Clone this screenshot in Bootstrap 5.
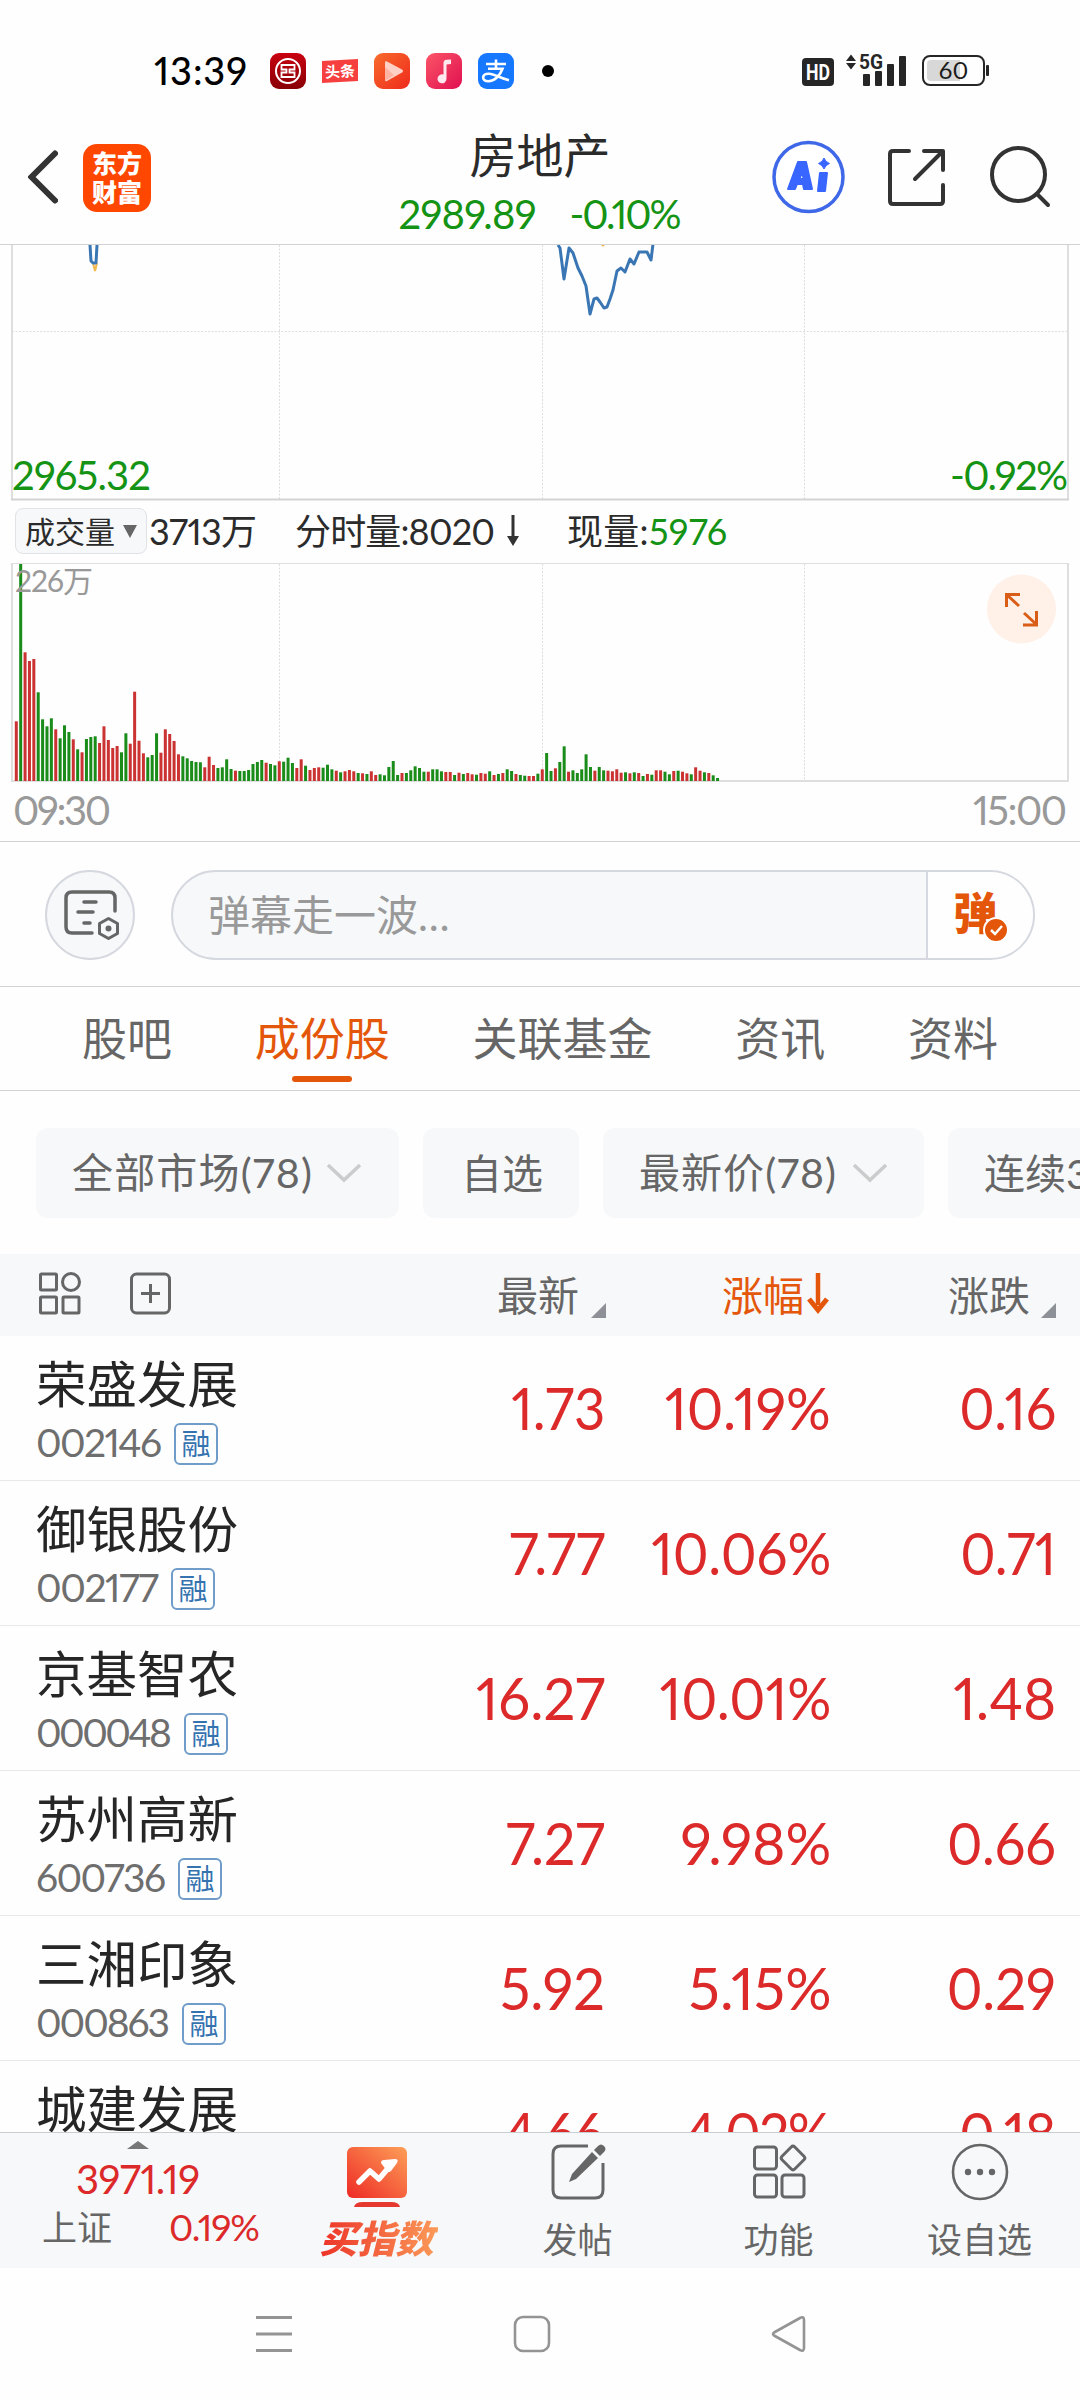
<!DOCTYPE html>
<html lang="zh-CN">
<head>
<meta charset="utf-8">
<meta name="viewport" content="width=device-width, initial-scale=1">
<title>房地产</title>
<link rel="stylesheet" href="https://cdn.jsdelivr.net/npm/bootstrap@5.3.0/dist/css/bootstrap.min.css">
<style>
:root{--up:#dc2a2a;--down:#149314;--brand:#e4570b;--soft:#f6f8fa;--rule:#d2d2d2;--txt2:#666}
html,body{width:1080px;height:2400px;overflow:hidden}
body{font-family:Lato,"Noto Sans CJK SC",sans-serif;font-feature-settings:"pnum" 1;color:#2b2b2b;background:#fefefe;line-height:1;font-size:42px;white-space:nowrap}
svg{display:block;flex:none}
.up{color:var(--up)}.down{color:var(--down)}.brandc{color:var(--brand)}
.fit{display:inline-block}
.statusbar{height:100px;padding:41px 91px 0 154px}
.clock{font-size:38px;font-weight:500;color:#000;width:116px;line-height:58px}
.statusicons{gap:16px}
.topbar{height:145px;border-bottom:1px solid var(--rule);position:relative;padding:0 28px 0 28px}
.logo-box{width:68px;height:68px;border-radius:14px;background:#ff4700;color:#fff;font-weight:900;font-size:25px;line-height:29px;padding-top:5px;margin-left:25px}
.titles{left:0;right:0;top:28px}
.title-main{font-size:47px;line-height:54px}
.title-sub{font-size:40px;line-height:40px;margin-top:12px;gap:33px}
.pricechart{height:256px}
.chart-label{font-size:40px;line-height:40px;bottom:6px}
.volrow{height:62px;font-size:36px;padding-left:15px;line-height:46px;padding-top:7px}
.volbtn{width:132px;height:46px;background:var(--soft);border:1px solid #e0e2e5;border-radius:8px;font-size:30px;padding-left:9px}
.volchart{height:219px}
.axis{height:60px;font-size:40px;line-height:56px;color:#999;padding:0 13px;border-bottom:1px solid var(--rule)}
.danmu{height:145px;border-bottom:1px solid var(--rule);padding:2px 45px 0;gap:36px}
.danmu-set{width:90px;height:90px;background:var(--soft);border:2px solid #d5d8de}
.danmu-box{width:864px;height:90px;border:2px solid #d5d8de;background:var(--soft);overflow:hidden}
.danmu-box .ph{color:#999;padding-left:35px;width:757px;border-right:2px solid #d5d8de;line-height:87px}
.danmu-send{background:#fefefe;width:105px;font-size:44px;font-weight:900;padding-left:25px;line-height:83px}
.maintabs{height:104px;border-bottom:1px solid var(--rule);font-size:45px;color:var(--txt2);padding:0 82px;line-height:104px}
.maintabs .on:after{content:"";position:absolute;left:50%;margin-left:-30px;bottom:8px;width:60px;height:6px;border-radius:3px;background:var(--brand)}
.chips{height:163px;padding:37px 0 0 36px;gap:24px;color:var(--txt2);overflow:hidden}
.chip{height:90px;background:var(--soft);border-radius:12px;padding-left:36px;font-size:41px;line-height:92px;flex:none}
.thead-bar{height:82px;background:var(--soft);color:var(--txt2);font-size:41px;line-height:84px;padding-left:39px}
.c1{width:605px}.c2{width:226px}.c3{width:225px}
.quote{height:145px;border-bottom:1px solid #e8e8e8}
.quote .who{width:380px;padding:21px 0 0 36px}
.quote .nm{font-size:50.5px;line-height:54px;color:#262626}
.quote .code{font-size:39px;line-height:45px;color:#6e6e6e;margin-top:9px}
.rong{width:44px;height:42px;border:2px solid #6f9cc9;border-radius:6px;color:#3572b0;font-size:29px;line-height:38px;margin:3px 0 0 12px;text-align:center}
.quote .num{font-size:58px;line-height:143px;color:var(--up);text-align:right}
.quotes{height:796px;overflow:hidden}
.dock{height:136px;background:var(--soft);border-top:1px solid #cacdd2;color:var(--txt2);font-size:35px}
.dock .idx{width:276px}
.dock .cell{width:201px;padding-top:10px}
.dock .lab{line-height:36px;margin-top:20px}
.buy{font-weight:900;font-style:italic;font-size:38px;background:linear-gradient(90deg,#ec2f26,#fb9a58);-webkit-background-clip:text;background-clip:text;color:transparent;padding:0 4px}
.sysnav{height:131px;padding:0 273px 0 256px}
</style>
<script src="https://cdn.jsdelivr.net/npm/bootstrap@5.3.0/dist/js/bootstrap.bundle.min.js"></script>
</head>
<body>
<div class="statusbar d-flex align-items-start">
  <div class="clock"><span class="fit" data-w="93">13:39</span></div>
  <div class="statusicons d-flex pt-2 mt-1">
    <svg width="36" height="36" viewBox="0 0 36 36"><defs><linearGradient id="gi" x2="0" y2="1"><stop stop-color="#c90010"/><stop offset="1" stop-color="#880006"/></linearGradient></defs><rect width="36" height="36" rx="9" fill="url(#gi)"/><g fill="none" stroke="#fff"><circle cx="18" cy="18" r="12" stroke-width="2"/><path d="M11.500 12h13v4.500h-5v3h5V24h-13v-4.500h5v-3h-5z" stroke-width="1.800"/></g></svg>
    <svg width="36" height="36" viewBox="0 0 36 36"><path d="M0 8l36-2v22L0 30z" fill="#f5403f"/><text x="18" y="24" font-size="15" font-weight="700" fill="#fff" text-anchor="middle" font-family="Noto Sans CJK SC,sans-serif" transform="rotate(-3 18 18)">头条</text></svg>
    <svg width="36" height="36" viewBox="0 0 36 36"><defs><linearGradient id="gp" x2="1" y2="1"><stop stop-color="#f76c2c"/><stop offset="1" stop-color="#ef2a1c"/></linearGradient></defs><rect width="36" height="36" rx="9" fill="url(#gp)"/><path d="M11 9.500q0-2 2-1l15 8q2 1.500 0 3l-15 8.500q-2 1-2-1z" fill="#ffd0c5"/><path d="M11 14l9 8-9 6z" fill="#ffb3a3"/></svg>
    <svg width="36" height="36" viewBox="0 0 36 36"><defs><linearGradient id="gm" x2="1" y2="1"><stop stop-color="#fb5567"/><stop offset="1" stop-color="#e00f50"/></linearGradient></defs><rect width="36" height="36" rx="9" fill="url(#gm)"/><path d="M17.500 10q0-3 3-3.200l4.500-.4v4.500l-4.500.7v14.200a4.500 4.500 0 1 1-3-4.200z" fill="#ffe9ee"/></svg>
    <svg width="36" height="36" viewBox="0 0 36 36"><rect width="36" height="36" rx="9" fill="#1677ff"/><g fill="none" stroke="#fff" stroke-width="2.600"><path d="M8 11h20M18 6.500v9M10 15.800h14.500C22 23 16 28.200 10.500 28.200c-8 0-6.500-8 .5-7.500 6 .5 11 4.500 20 6.500"/></g></svg>
  </div>
  <svg width="12" height="12" style="margin:24px 0 0 28px"><circle cx="6" cy="6" r="6"/></svg>
  <svg class="ms-auto" width="188" height="36" viewBox="802 52 188 36" style="margin:11px -1px 0 0">
    <rect x="802" y="58" width="32" height="28" rx="4" fill="#262626"/><text x="818" y="80" font-family="Roboto,sans-serif" font-weight="700" font-size="22.500" fill="#fff" text-anchor="middle" textLength="24" lengthAdjust="spacingAndGlyphs">HD</text>
    <path d="M846 61l5-6.500 5 6.500zM846 63h10l-5 6.500z" fill="#262626"/><text x="859" y="69" font-family="Roboto,sans-serif" font-weight="700" font-size="21" fill="#262626" textLength="24" lengthAdjust="spacingAndGlyphs">5G</text>
    <g fill="#262626"><rect x="863" y="74" width="7" height="12" rx="1"/><rect x="875" y="71" width="7" height="15" rx="1"/><rect x="887" y="64" width="7" height="22" rx="1"/><rect x="899" y="56" width="7" height="30" rx="1"/><rect x="986" y="65" width="3" height="11" rx="1"/></g>
    <rect x="923" y="56" width="61" height="29" rx="7" fill="none" stroke="#262626" stroke-width="2"/><path d="M931 60h29v21h-29q-4 0-4-4V64q0-4 4-4z" fill="#d8d8d8"/><text x="953.500" y="79" font-family="Lato,sans-serif" font-size="24" text-anchor="middle" fill="#1c1c1c">60</text>
  </svg>
</div>

<header class="topbar d-flex">
  <svg width="30" height="54" viewBox="0 0 30 54" style="margin-top:50px"><path d="M27 3.500L3.500 27 27 50.500" fill="none" stroke="#333" stroke-width="6" stroke-linecap="round"/></svg>
  <div class="logo-box text-center" style="margin-top:44px">东方<br>财富</div>
  <div class="titles position-absolute text-center">
    <div class="title-main">房地产</div>
    <div class="title-sub down d-flex justify-content-center"><span class="fit" data-w="138">2989.89</span><span class="fit" data-w="112">-0.10%</span></div>
  </div>
  <svg class="ms-auto" width="280" height="74" viewBox="772 140 280 74" style="margin-top:40px">
    <circle cx="808.500" cy="177" r="34.500" fill="#fff" stroke="#3f68e8" stroke-width="3.500"/>
    <g fill="#3866ff" stroke="#3866ff" stroke-linejoin="round"><path d="M788 189l10-27h8l6 27h-8l-1-5h-6l-2 5zM799.500 179h4l-1-8z" stroke-width="2" fill-rule="evenodd"/><path d="M820 173h7l-2 18h-7z" stroke-width="2"/><path d="M824 158q1.500 4 5.500 5.500-4 1.500-5.500 5.500-1.500-4-5.500-5.500 4-1.500 5.500-5.500z" stroke-width="1"/></g>
    <g fill="none" stroke="#333" stroke-width="4" stroke-linecap="round" stroke-linejoin="round"><path d="M909 151h-16q-3 0-3 3v47q0 3 3 3h47q3 0 3-3v-16M924 151h19v19M942 152l-27 27"/><circle cx="1018.500" cy="174.500" r="26.500"/><path d="M1037 194l11 11"/></g>
  </svg>
</header>

<section class="pricechart position-relative">
  <svg width="1080" height="256" viewBox="0 245 1080 256">
    <g fill="none" stroke="#dedede"><path d="M12 245v255M1068 245v255" stroke-width="2"/><path d="M279.500 245v254M542.500 245v254M804.500 245v254M12 331.500h1056" stroke-dasharray="2 1.500"/><path d="M11 499.500h1058" stroke="#d3d3d3" stroke-width="2"/></g>
    <path d="M93 263l2 8 2-8" fill="none" stroke="#f2b84d" stroke-width="2"/>
    <g fill="none" stroke="#3a76b4" stroke-width="3" stroke-linejoin="round"><path d="M90 245l1 16 2 2h3l1-18"/><path d="M558 245l2 3 4 31 5-31 4 5 5 15 4 8 4 10 4 28 4-15 3-1 3 4 4 6 3-1 3-8 3-9 4-19 4-3 4 4 5-13 4 5 5-12h8l4 8 2-16"/></g>
    <circle cx="603" cy="245" r="1.500" fill="#f2b84d"/>
  </svg>
  <span class="chart-label down position-absolute" style="left:12px"><span class="fit" data-w="139">2965.32</span></span>
  <span class="chart-label down position-absolute" style="right:12px"><span class="fit" data-w="118">-0.92%</span></span>
</section>
<div class="volrow d-flex">
  <div class="volbtn d-flex align-items-center">成交量<svg class="ms-2" width="14" height="13"><path d="M0 0h14L7 13z" fill="#666"/></svg></div>
  <span class="fit" data-w="108" style="margin-left:2px">3713万</span>
  <span class="fit" data-w="200" style="margin-left:38px">分时量:8020</span>
  <svg width="12" height="32" viewBox="0 0 12 32" style="margin:6px 0 0 12px"><path d="M6 1v26" stroke="#333" stroke-width="3"/><path d="M0 22l6 10 6-10z" fill="#333"/></svg>
  <span class="fit" data-w="160" style="margin-left:48px">现量:<span class="down">5976</span></span>
</div>
<section class="volchart position-relative">
  <svg width="1080" height="219" viewBox="0 563 1080 219">
    <g fill="none" stroke="#dedede"><path d="M12 563.500h1056" stroke-width="1"/><path d="M12 563v218h1056v-218" stroke-width="2"/><path d="M279.500 564v217M542.500 564v217M804.500 564v217" stroke-dasharray="2 1.500"/></g>
    <g id="bars"></g>
    <circle cx="1021.500" cy="609" r="34.500" fill="#fff0e8"/>
    <path d="M1006.500 607v-12.500h13.500M1007 595l12 11M1023 625h13.500v-14M1036 624l-12-11" fill="none" stroke="#da5d17" stroke-width="3"/>
    <text x="15" y="592" font-size="30" fill="#999" textLength="78">226万</text>
  </svg>
</section>
<div class="axis d-flex justify-content-between"><span class="fit" data-w="98">09:30</span><span class="fit" data-w="94">15:00</span></div>

<section class="danmu d-flex align-items-center">
  <div class="danmu-set rounded-circle d-flex align-items-center justify-content-center">
    <svg width="56" height="52" viewBox="0 0 56 52" style="margin-left:2px"><g fill="none" stroke="#666" stroke-width="3.500" stroke-linecap="round"><path d="M29 44H9q-6 0-6-6V9q0-6 6-6h37q6 0 6 6v13"/><path d="M21 13h12M15 23h15M21 34h6"/><path d="M45.500 29.500l9 5v10l-9 5-9-5v-10z" stroke-width="3" stroke-linejoin="round"/></g><circle cx="45.500" cy="39.500" r="3" fill="#666"/></svg>
  </div>
  <div class="danmu-box rounded-pill d-flex">
    <div class="ph">弹幕走一波<span style="letter-spacing:3px">…</span></div>
    <div class="danmu-send brandc position-relative">弹<svg class="position-absolute" style="left:55px;top:45px" width="26" height="26"><circle cx="13" cy="13" r="12" fill="#e4570b" stroke="#fff" stroke-width="2"/><path d="M8 13l4 4 7-8" fill="none" stroke="#fff" stroke-width="2.500"/></svg></div>
  </div>
</section>
<nav class="maintabs d-flex justify-content-between">
  <span>股吧</span><span class="on brandc position-relative">成份股</span><span>关联基金</span><span>资讯</span><span>资料</span>
</nav>
<section class="chips d-flex">
  <div class="chip d-flex align-items-center" style="width:363px"><span class="fit" data-w="240">全部市场(78)</span><svg width="36" height="20" style="margin-left:14px"><path d="M2 2l16 15L34 2" fill="none" stroke="#ccc" stroke-width="3.500"/></svg></div>
  <div class="chip" style="width:156px;padding-left:38px">自选</div>
  <div class="chip d-flex align-items-center" style="width:321px"><span class="fit" data-w="197">最新价(78)</span><svg width="36" height="20" style="margin-left:16px"><path d="M2 2l16 15L34 2" fill="none" stroke="#ccc" stroke-width="3.500"/></svg></div>
  <div class="chip" style="width:300px">连续3日</div>
</section>
<div class="thead-bar d-flex">
  <div class="d-flex" style="width:458px;gap:49px;padding-top:18px">
    <svg width="42" height="43" viewBox="0 0 42 43" fill="none" stroke="#666" stroke-width="3"><rect x="1.500" y="2" width="16" height="16" rx="1"/><circle cx="32" cy="10" r="8.500"/><rect x="1.500" y="25" width="16" height="16" rx="1"/><rect x="24" y="25" width="16" height="16" rx="1"/></svg>
    <svg width="42" height="43" viewBox="0 0 42 43" fill="none" stroke="#666" stroke-width="3"><rect x="1.500" y="2" width="38" height="39" rx="5"/><path d="M20.500 12v19M11 21.500h19"/></svg>
  </div>
  <div class="d-flex" style="width:225px">最新<svg width="15" height="15" style="margin:49px 0 0 12px"><path d="M15 0v15H0z" fill="#8d9096"/></svg></div>
  <div class="d-flex brandc" style="width:226px">涨幅<svg width="24" height="42" style="margin:18px 0 0 2px"><path d="M12 1v32" stroke="#e4570b" stroke-width="4.500"/><path d="M3 27l9 11 9-11" fill="none" stroke="#e4570b" stroke-width="5"/></svg></div>
  <div class="d-flex">涨跌<svg width="15" height="15" style="margin:49px 0 0 11px"><path d="M15 0v15H0z" fill="#8d9096"/></svg></div>
</div>
<main class="quotes" id="quotes"></main>

<footer class="dock d-flex">
  <div class="idx d-flex flex-column align-items-center">
    <svg width="22" height="8" style="margin-top:8px"><path d="M11 0l11 8H0z" fill="#777"/></svg>
    <div class="up" style="font-size:40px;line-height:40px;margin-top:10px"><span class="fit" data-w="124">3971.19</span></div>
    <div class="d-flex justify-content-between" style="width:218px;line-height:42px;margin:7px 0 0 26px"><span>上证</span><span class="fit up" data-w="91" style="font-size:37px">0.19%</span></div>
  </div>
  <div class="cell d-flex flex-column align-items-center">
    <svg width="60" height="62" viewBox="0 0 60 62" style="margin-top:4px"><defs><linearGradient id="gb" x1="0" y1="1" x2="1" y2="0"><stop stop-color="#ee2a25"/><stop offset="1" stop-color="#fd9f58"/></linearGradient></defs><rect width="60" height="51" rx="6" fill="url(#gb)"/><path d="M12 35l11-11 9 8 11-13" fill="none" stroke="#fff" stroke-width="5.500" stroke-linecap="round" stroke-linejoin="round"/><path d="M34 16q0-3 3-3l11-1q4 0 2 4l-6 8q-2 2-4 0z" fill="#fff"/><path d="M7 60q1-5 9-5h28q8 0 9 5z" fill="#e5382e"/></svg>
    <div class="lab buy" style="margin-top:9px;line-height:40px">买指数</div>
  </div>
  <div class="cell d-flex flex-column align-items-center">
    <svg width="56" height="58" viewBox="0 0 56 58"><path d="M38 3H11q-8 0-8 8v36q0 8 8 8h34q8 0 8-8V20" fill="none" stroke="#666" stroke-width="3"/><path d="M48 3q3-3 6 0t0 6l-4 4-6-6zM42 9l6 6-22 21-7 3 3-8z" fill="#666"/></svg>
    <div class="lab">发帖</div>
  </div>
  <div class="cell d-flex flex-column align-items-center">
    <svg width="56" height="58" viewBox="0 0 56 58" fill="none" stroke="#666" stroke-width="3"><rect x="3.500" y="4" width="22" height="22" rx="3"/><rect x="3.500" y="32" width="22" height="22" rx="3"/><rect x="31" y="32" width="22" height="22" rx="3"/><rect x="33" y="6" width="18" height="18" rx="2.500" transform="rotate(45 42 15)"/></svg>
    <div class="lab">功能</div>
  </div>
  <div class="cell d-flex flex-column align-items-center">
    <svg width="58" height="58" viewBox="0 0 58 58"><circle cx="29" cy="29" r="27" fill="none" stroke="#666" stroke-width="2.600"/><g fill="#666"><circle cx="17" cy="29" r="3.200"/><circle cx="29" cy="29" r="3.200"/><circle cx="41" cy="29" r="3.200"/></g></svg>
    <div class="lab">设自选</div>
  </div>
</footer>
<div class="sysnav d-flex justify-content-between align-items-center">
  <svg width="36" height="38"><path d="M0 2.500h36M0 19h36M0 35.500h36" stroke="#949494" stroke-width="3"/></svg>
  <svg width="38" height="38" fill="none" stroke="#949494" stroke-width="2.600"><rect x="2" y="2" width="34" height="34" rx="8"/></svg>
  <svg width="36" height="38" fill="none" stroke="#949494" stroke-width="2.600" stroke-linejoin="round"><path d="M3 17.500L29 3q4-2 4 2v28q0 4-4 2L3 20.500q-2-1.500 0-3z"/></svg>
</div>

<script>
const vol="r544 g72 r337 r363 r357 g457 g538 g559 g535 r568 g595 g556 g576 r598 g628 r637 g597 g591 g589 r609 r559 r600 r624 r618 g637 g580 r611 r455 r602 r640 g652 g645 g580 r638 r568 r582 r603 r643 g649 g655 g663 g666 g667 r682 r650 r675 g684 g682 g658 g687 r692 g693 g693 g690 g672 g666 g660 r668 g672 g676 r664 g665 g653 g669 r684 r658 g677 r690 r684 r682 g683 g674 g688 r692 g697 r694 r690 r694 g699 r700 g702 r694 r705 g703 g706 g681 g663 g705 r699 g699 g691 g679 g684 g695 r695 g688 g688 g694 r696 r696 g705 r698 g702 r699 r703 g704 r699 r701 g694 r705 g702 r699 g688 g693 r702 g705 g707 r708 r708 g701 r688 g639 g693 r685 g666 g619 r695 g691 g699 g688 g643 g681 r692 g681 g691 r692 r694 r688 r698 g697 r700 g697 r699 g708 r702 g704 r691 r691 g695 g703 r693 g692 r695 r700 g703 r682 r692 g697 r699 g706 g714".split(" ");
document.getElementById("bars").innerHTML=vol.map((v,i)=>{
  const h=(723-v.slice(1))/3;
  return `<rect x="${(14.8+4.383*i).toFixed(2)}" y="${(781-h).toFixed(1)}" width="3" height="${h.toFixed(1)}" fill="${v[0]=="r"?"#cb3232":"#1a8c1a"}"/>`;
}).join("");

const rows=[
["荣盛发展","002146",126,"1.73",94,"10.19%",166,"0.16",97],
["御银股份","002177",123,"7.77",96,"10.06%",180,"0.71",96],
["京基智农","000048",136,"16.27",129,"10.01%",172,"1.48",103],
["苏州高新","600736",130,"7.27",99,"9.98%",151,"0.66",109],
["三湘印象","000863",134,"5.92",105,"5.15%",143,"0.29",109],
["城建发展","600266",134,"4.66",101,"4.02%",147,"0.18",97]];
document.getElementById("quotes").innerHTML=rows.map(r=>`<div class="quote d-flex">
<div class="who"><div class="nm">${r[0]}</div><div class="code d-flex"><span class="fit" data-w="${r[2]}">${r[1]}</span><span class="rong">融</span></div></div>
<div class="num" style="width:225px"><span class="fit" data-w="${r[4]}">${r[3]}</span></div>
<div class="num c2"><span class="fit" data-w="${r[6]}">${r[5]}</span></div>
<div class="num c3"><span class="fit" data-w="${r[8]}">${r[7]}</span></div></div>`).join("");

document.querySelectorAll(".fit").forEach(e=>{
  const n=e.textContent.length, w=e.getBoundingClientRect().width, t=+e.dataset.w;
  if(e.closest(".num")){
    const k=Math.max(.93,Math.min(1,t/w));
    e.style.transform=`scaleX(${k})`;
    e.style.transformOrigin="right";
    e.style.letterSpacing=(t/k-w)/(n-1)+"px";
    e.style.width=t/k+"px";
  }else{
    e.style.letterSpacing=(t-w)/(n-1)+"px";
    e.style.width=t+"px";
  }
  e.style.textAlign="left";
});
</script>
</body>
</html>
